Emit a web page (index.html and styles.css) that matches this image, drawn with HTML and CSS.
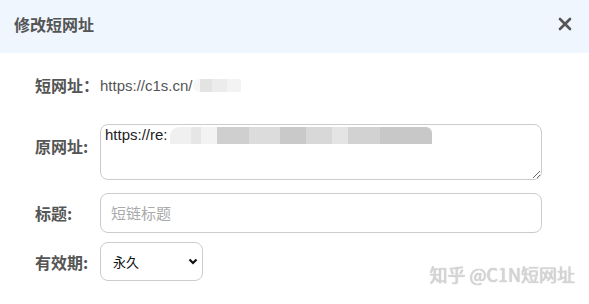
FILE: index.html
```html
<!DOCTYPE html>
<html lang="zh-CN">
<head>
    <meta charset="UTF-8">
    <meta name="viewport" content="width=device-width, initial-scale=1.0">
    <title>修改短网址</title>
    <link rel="stylesheet" href="styles.css">
</head>
<body>

    <div class="dialog">
        <div class="header">
            <span class="title">修改短网址</span>
            <svg class="close" width="14" height="14" viewBox="0 0 14 14">
                <path d="M2 2 L12 12 M12 2 L2 12" stroke="#555" stroke-width="2.6" stroke-linecap="round"/>
            </svg>
        </div>

        <div class="form">
            <div class="row row-short">
                <label class="label">短网址：</label>
                <span class="value">https://c1s.cn/<span class="blur blur-short"></span></span>
            </div>

            <div class="row row-top">
                <label class="label label-top">原网址:</label>
                <div class="field">
                    <textarea class="control area">https://re:</textarea>
                    <span class="blur blur-long"></span>
                </div>
            </div>

            <div class="row">
                <label class="label">标题:</label>
                <input class="control text" type="text" placeholder="短链标题">
            </div>

            <div class="row">
                <label class="label">有效期:</label>
                <div class="field">
                    <select class="control pick">
                        <option>永久</option>
                    </select>
                    <svg class="arrow" width="10" height="7" viewBox="0 0 10 7">
                        <path d="M1.5 1.5 L5 5 L8.5 1.5" fill="none" stroke="#111" stroke-width="2.2"/>
                    </svg>
                </div>
            </div>
        </div>

        <div class="mark">知乎 @C1N短网址</div>
    </div>

</body>
</html>
```

FILE: styles.css
```css
body { margin: 0; background-color: #fff; font-family: "Liberation Sans", "Noto Sans CJK SC", sans-serif; }
.dialog { position: relative; width: 589px; height: 304px; overflow: hidden; }
.header { height: 53px; background-color: #eff6fe; display: flex; justify-content: space-between; align-items: flex-start; padding: 13px 17px 0 14px; box-sizing: border-box; }
.title { font-family: "Noto Sans CJK SC", sans-serif; font-size: 16px; font-weight: bold; color: #555; line-height: 22px; }
.close { margin-top: 4px; }
.form { padding: 20px 0 0 35px; }
.row { display: flex; align-items: center; }
.row-short { height: 24px; margin-bottom: 27px; }
.row-top { align-items: flex-start; margin-bottom: 13px; }
.row + .row + .row + .row { margin-top: 9px; }
.label { width: 65px; flex: none; font-family: "Noto Sans CJK SC", sans-serif; font-size: 16px; font-weight: bold; color: #555; line-height: 20px; }
.label-top { padding-top: 12px; }
.value { position: relative; font-size: 15px; color: #555; }
.field { position: relative; }
.control { box-sizing: border-box; border: 1px solid #ccc; border-radius: 8px; background: #fff; font-family: "Liberation Sans", "Noto Sans CJK SC", sans-serif; outline: none; }
.area { display: block; width: 442px; height: 56px; padding: 1px 4px; font-size: 15px; color: #222; resize: vertical; }
.text { width: 442px; height: 40px; padding: 0 10px; font-size: 15px; }
.text::placeholder { color: #aaa; font-family: "Noto Sans CJK SC", sans-serif; }
.pick { display: block; width: 103px; height: 39px; padding: 0 12px; font-size: 13px; color: #111; appearance: none; -webkit-appearance: none; font-family: "Noto Sans CJK SC", sans-serif; }
.arrow { position: absolute; left: 88px; top: 16px; pointer-events: none; }
.blur { position: absolute; display: block; pointer-events: none; }
.blur-short { left: 93px; top: 2px; width: 48px; height: 13px; border-radius: 7px 2px 2px 7px; background: linear-gradient(90deg, #f6f6f6 0 15%, #e3e3e3 15% 40%, #ececec 40% 70%, #f3f3f3 70%); }
.blur-long { left: 70px; top: 3px; width: 262px; height: 17px; border-radius: 9px 6px 0 0; background: linear-gradient(90deg, #f0f0f0 0 8%, #e6e6e6 8% 12%, #f3f3f3 12% 18%, #cfcfcf 18% 30%, #dcdcdc 30% 42%, #c9c9c9 42% 52%, #d8d8d8 52% 62%, #e4e4e4 62% 68%, #d2d2d2 68% 80%, #c8c8c8 80%); }
.mark { position: absolute; right: 14px; bottom: 17px; font-family: "Noto Sans CJK SC", sans-serif; font-size: 18px; color: #d6d6d6; text-shadow: 0 0 1px #aaa; }
```
